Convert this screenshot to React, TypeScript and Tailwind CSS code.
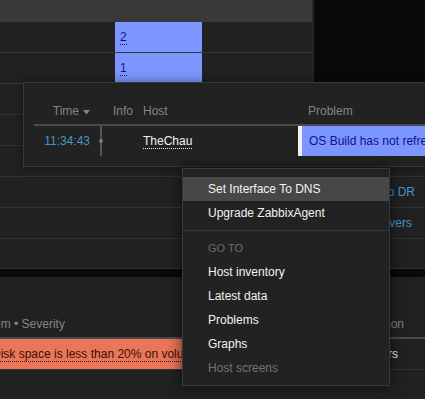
import React from "react";

const countRows = ["2", "1"];

const lowerRows = [
  { text: "", pr: "" },
  { text: "", pr: "" },
  { text: "", pr: "" },
  { text: "Switch to DR", pr: "pr-[10px]" },
  { text: "Restart servers", pr: "pr-[13px]" },
];

const menuGoTo = [
  { label: "Host inventory", disabled: false },
  { label: "Latest data", disabled: false },
  { label: "Problems", disabled: false },
  { label: "Graphs", disabled: false },
  { label: "Host screens", disabled: true },
];

function CountRow({ value }: { value: string }) {
  return (
    <div className="flex h-[31px] border-b border-[#383838]">
      <div className="ml-[115px] flex w-[87px] items-center bg-[#7b97ff] pl-[5px]">
        <span className="border-b border-dotted border-[#14148a] text-[#14148a]">{value}</span>
      </div>
    </div>
  );
}

function ProblemHint() {
  return (
    <div className="absolute left-[23px] top-[82px] w-[470px] border border-[#383838] bg-[#222222] pb-[10px] pl-[10px] shadow-[0_0_10px_rgba(0,0,0,0.4)]">
      <div className="flex h-[43px] items-end border-b-2 border-[#4a4a4a] pb-[6px] text-[#858585]">
        <div className="flex w-[66px] shrink-0 items-center justify-end gap-[4px] pr-[10px]">
          <span>Time</span>
          <svg width="7" height="5" viewBox="0 0 7 5" className="mt-[2px]">
            <path d="M0 0 L7 0 L3.5 4.5 Z" fill="#858585" />
          </svg>
        </div>
        <div className="w-[13px] shrink-0" />
        <div className="w-[30px] shrink-0">Info</div>
        <div className="w-[155px] shrink-0">Host</div>
        <div className="pl-[10px]">Problem</div>
      </div>
      <div className="flex h-[30px]">
        <div className="flex w-[66px] shrink-0 items-center justify-end pr-[10px] text-[#4796c4]">11:34:43</div>
        <div className="flex w-[13px] shrink-0 items-center border-l-2 border-[#4b5660]">
          <div className="-ml-[3px] h-[4px] w-[4px] rounded-full bg-[#6d7d8a]" />
        </div>
        <div className="w-[30px] shrink-0" />
        <div className="flex w-[155px] shrink-0 items-center">
          <span className="border-b border-dotted border-[#f2f2f2] text-[#f2f2f2]">TheChau</span>
        </div>
        <div className="flex min-w-0 flex-1">
          <div className="w-[4px] shrink-0 bg-[#f2f2f2]" />
          <div className="flex flex-1 items-center overflow-hidden whitespace-nowrap bg-[#7b97ff] pl-[7px] text-[#10108c]">
            OS Build has not refreshed in 30 days
          </div>
        </div>
      </div>
    </div>
  );
}

function ContextMenu() {
  return (
    <div className="absolute left-[182px] top-[168px] w-[208px] border border-[#383838] bg-[#222222] pb-[5px] pt-[8px] text-[#f2f2f2] shadow-[0_0_14px_rgba(0,0,0,0.65)]">
      <div className="flex h-[24px] items-center bg-[#474747] pl-[25px]">Set Interface To DNS</div>
      <div className="flex h-[24px] items-center pl-[25px]">Upgrade ZabbixAgent</div>
      <div className="my-[5px] h-px bg-[#383838]" />
      <div className="flex h-[24px] items-center pl-[25px] text-[11px] text-[#6b6b6b]">GO TO</div>
      {menuGoTo.map((item) => (
        <div
          key={item.label}
          className={`flex h-[24px] items-center pl-[25px] ${item.disabled ? "text-[#737373]" : ""}`}
        >
          {item.label}
        </div>
      ))}
    </div>
  );
}

export default function App() {
  return (
    <div className="relative h-[399px] w-[425px] overflow-hidden bg-[#08090b] font-['Liberation_Sans',Arial,sans-serif] text-[12px] leading-[14px]">
      <section className="border-b border-[#333333] bg-[#212121]">
        <div className="flex h-[84px]">
          <div className="flex w-[312px] flex-col">
            <div className="h-[22px] bg-[#393939]" />
            {countRows.map((v) => (
              <CountRow key={v} value={v} />
            ))}
          </div>
          <div className="w-[2px] bg-[#262626]" />
          <div className="flex-1 bg-[#08090b]" />
        </div>
        {lowerRows.map((row, i) => (
          <div key={i} className={`flex h-[31px] items-center justify-end border-b border-[#333333] ${row.pr}`}>
            <span className="text-[#4796c4]">{row.text}</span>
          </div>
        ))}
        <div className="h-[29px]" />
      </section>

      <div className="h-[8px]" />

      <section className="bg-[#212121]">
        <div className="flex h-[62px] items-end justify-between border-b-2 border-[#4a4a4a] pb-[6px] text-[#858585]">
          <span className="-ml-[34px] whitespace-nowrap">Problem • Severity</span>
          <span className="pr-[21px]">Action</span>
        </div>
        <div className="flex h-[31px] items-stretch justify-between border-b border-[#333333]">
          <div className="flex w-[340px] items-center overflow-hidden whitespace-nowrap bg-[#e97659]">
            <span className="-ml-[8px] border-b border-dotted border-[#3a0f08] text-[#3a0f08]">
              Disk space is less than 20% on volume C:
            </span>
          </div>
          <div className="flex items-center pr-[27px] text-[#f2f2f2]">Users</div>
        </div>
        <div className="h-[40px]" />
      </section>

      <ProblemHint />
      <ContextMenu />
    </div>
  );
}
